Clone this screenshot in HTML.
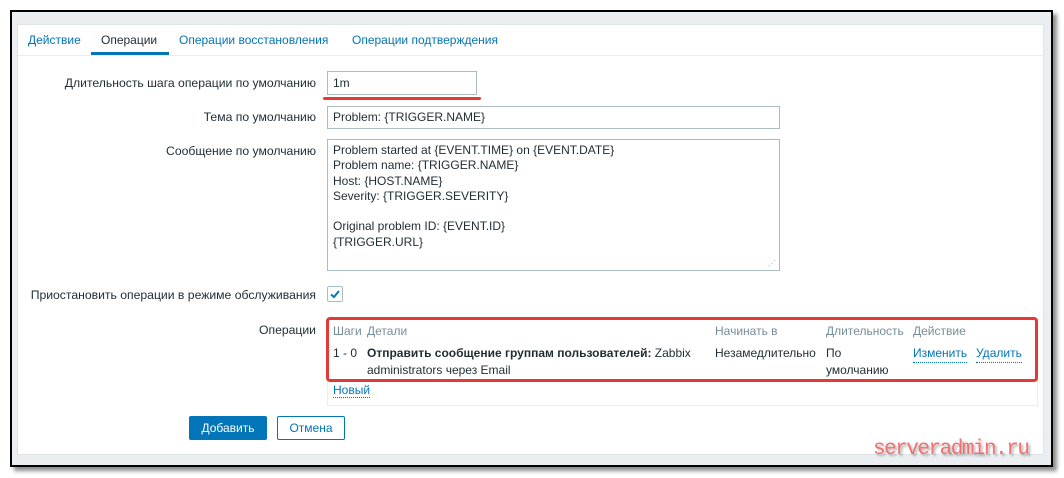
<!DOCTYPE html>
<html><head><meta charset="utf-8"><style>
*{margin:0;padding:0;box-sizing:border-box}
body{width:1064px;height:478px;background:#fff;font-family:"Liberation Sans",Arial,sans-serif;font-size:12px;color:#1f2c33;position:relative;overflow:hidden}
.a{position:absolute;white-space:nowrap}
.frame{position:absolute;left:10px;top:10px;width:1043px;height:457px;border:2px solid #000;background:#ebeef0;box-shadow:4px 4px 4px rgba(0,0,0,.45)}
.panel{position:absolute;left:17px;top:24px;width:1027px;height:431px;background:#fff;border:1px solid #dfe4e7}
.lnk{color:#0275b8}
.lbl{position:absolute;right:748px;white-space:nowrap;font-size:12.2px}
.inp{position:absolute;border:1px solid #acbbc2;background:#fff;padding-left:5px}
.th{color:#768d99}
.dot{border-bottom:1px dotted #0275b8}
.r{line-height:17px}
</style></head><body>
<div class="frame"></div>
<div class="panel"></div>
<div class="a" style="left:18px;top:55px;width:1025px;height:1px;background:#ebeef0"></div>
<div class="a lnk" style="left:28px;top:33px">Действие</div>
<div class="a" style="left:101px;top:33px">Операции</div>
<div class="a" style="left:91px;top:52px;width:78px;height:3px;background:#0275b8"></div>
<div class="a lnk" style="left:179px;top:33px">Операции восстановления</div>
<div class="a lnk" style="left:352px;top:33px">Операции подтверждения</div>

<div class="lbl" style="top:76px">Длительность шага операции по умолчанию</div>
<div class="inp" style="left:327px;top:71px;width:150px;height:24px;line-height:22px">1m</div>
<div class="a" style="left:323px;top:97px;width:158px;height:3px;background:#e53935;border-radius:2px"></div>

<div class="lbl" style="top:110px">Тема по умолчанию</div>
<div class="inp" style="left:327px;top:106px;width:453px;height:23px;line-height:21px">Problem: {TRIGGER.NAME}</div>

<div class="lbl" style="top:144px">Сообщение по умолчанию</div>
<div class="inp" style="left:327px;top:139px;width:453px;height:132px;padding-top:3px;line-height:15.3px">Problem started at {EVENT.TIME} on {EVENT.DATE}<br>Problem name: {TRIGGER.NAME}<br>Host: {HOST.NAME}<br>Severity: {TRIGGER.SEVERITY}<br><br>Original problem ID: {EVENT.ID}<br>{TRIGGER.URL}</div>
<div class="a" style="left:768px;top:259px;color:#aaa;font-size:8px">⋰</div>

<div class="lbl" style="top:288px">Приостановить операции в режиме обслуживания</div>
<div class="a" style="left:327px;top:286px;width:16px;height:16px;border:1px solid #acbbc2;border-radius:2px"></div>
<svg class="a" style="left:329px;top:288px" width="12" height="12"><path d="M2 6.5 L5 9 L10 3" stroke="#0275b8" stroke-width="2" fill="none"/></svg>

<div class="lbl" style="top:323px">Операции</div>
<div class="a" style="left:327px;top:318px;width:711px;height:88px;border:1px solid #ebeef0"></div>
<div class="a" style="left:326px;top:317px;width:712px;height:65px;border:3px solid #e53935;border-radius:4px"></div>
<div class="a th" style="left:333px;top:324px">Шаги</div>
<div class="a th" style="left:367px;top:324px">Детали</div>
<div class="a th" style="left:715px;top:324px">Начинать в</div>
<div class="a th" style="left:826px;top:324px">Длительность</div>
<div class="a th" style="left:913px;top:324px">Действие</div>
<div class="a r" style="left:333px;top:345px">1 - 0</div>
<div class="a r" style="left:367px;top:345px"><b>Отправить сообщение группам пользователей:</b> Zabbix<br>administrators через Email</div>
<div class="a r" style="left:715px;top:345px">Незамедлительно</div>
<div class="a r" style="left:826px;top:345px">По<br>умолчанию</div>
<div class="a lnk dot r" style="left:913px;top:345px">Изменить</div>
<div class="a lnk dot r" style="left:976px;top:345px">Удалить</div>
<div class="a lnk dot" style="left:333px;top:383px">Новый</div>

<div class="a" style="left:189px;top:416px;width:78px;height:24px;background:#0275b8;color:#fff;border-radius:2px;text-align:center;line-height:24px">Добавить</div>
<div class="a" style="left:277px;top:416px;width:68px;height:24px;border:1px solid #0275b8;color:#0275b8;border-radius:2px;text-align:center;line-height:22px">Отмена</div>

<div class="a" style="left:873px;top:438px;font-family:'Liberation Mono',monospace;font-size:21px;color:#f07070;text-shadow:2px 2px 2px rgba(0,0,0,.3);letter-spacing:-1.5px">serveradmin.ru</div>
</body></html>
